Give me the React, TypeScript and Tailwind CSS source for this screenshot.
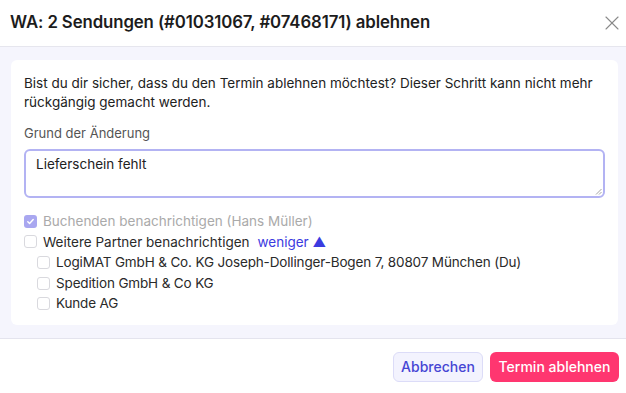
import { X } from "lucide-react";

const partners = [
  "LogiMAT GmbH & Co. KG Joseph-Dollinger-Bogen 7, 80807 München (Du)",
  "Spedition GmbH & Co KG",
  "Kunde AG",
];

function Box({ checked = false }: { checked?: boolean }) {
  if (checked) {
    return (
      <span className="flex h-[13px] w-[13px] shrink-0 items-center justify-center rounded-[3px] bg-[#a9a7f0]">
        <svg width="9" height="9" viewBox="0 0 10 10" fill="none">
          <path d="M2 5.2l2 2 4-4.4" stroke="white" strokeWidth="1.6" strokeLinecap="round" strokeLinejoin="round" />
        </svg>
      </span>
    );
  }
  return <span className="h-[13px] w-[13px] shrink-0 rounded-[3px] border border-[#d9d9de] bg-white" />;
}

export default function App() {
  return (
    <div className="flex h-[393px] w-[626px] flex-col bg-white font-['Inter',sans-serif] text-[#222]">
      <header className="flex h-[47px] shrink-0 items-center justify-between border-b border-[#e6e6ee] pl-[10px] pr-[2px]">
        <h1 className="text-[16.8px] font-semibold tracking-[-0.1px] text-[#1c1c1c]">
          WA: 2 Sendungen (#01031067, #07468171) ablehnen
        </h1>
        <X size={24} strokeWidth={1.1} className="text-[#8a8a8a]" />
      </header>

      <main className="flex-1 border-b border-[#e4e4ee] bg-[#f5f5fd] pb-[13px] pl-[11px] pr-[8px] pt-[13px]">
        <div className="h-full rounded-md bg-white px-[13px] pt-[14px]">
          <p className="text-[13.5px] leading-[19px] text-[#222]">
            Bist du dir sicher, dass du den Termin ablehnen möchtest? Dieser Schritt kann nicht mehr rückgängig gemacht werden.
          </p>
          <label className="mt-[12px] block text-[13px] leading-[18px] text-[#555]">Grund der Änderung</label>
          <div className="relative mt-[7px] h-[49px] rounded-md border-2 border-[#b3b3f3] px-[10px] pt-[4px] text-[13.5px] leading-[18px] text-[#222]">
            Lieferschein fehlt
            <svg className="absolute bottom-[1px] right-[1px]" width="7" height="7" viewBox="0 0 7 7">
              <path d="M6.5 1L1 6.5M6.5 4L4 6.5" stroke="#9a9a9a" strokeWidth="0.9" />
            </svg>
          </div>
          <div className="mt-[14px] flex flex-col gap-[2px] text-[13.5px] leading-[18.6px]">
            <div className="flex items-center gap-[6px]">
              <Box checked />
              <span className="text-[#aaaaaa]">Buchenden benachrichtigen (Hans Müller)</span>
            </div>
            <div className="flex items-center gap-[6px]">
              <Box />
              <span className="text-[#2a2a2a]">Weitere Partner benachrichtigen</span>
              <span className="ml-[2px] text-[#3b3be0]">weniger ▲</span>
            </div>
            <div className="flex flex-col gap-[2px] pl-[13px]">
              {partners.map((p) => (
                <div key={p} className="flex items-center gap-[6px]">
                  <Box />
                  <span className="tracking-[-0.15px] text-[#2a2a2a]">{p}</span>
                </div>
              ))}
            </div>
          </div>
        </div>
      </main>

      <footer className="flex h-[54px] shrink-0 items-center justify-end gap-[7px] pr-[7px] pt-[1px]">
        <button className="h-[30px] w-[90px] rounded-md border border-[#dcdcf8] bg-[#f3f3fe] text-[14px] font-medium text-[#4646d4]">
          Abbrechen
        </button>
        <button className="h-[30px] w-[129px] rounded-md bg-[#ff3670] text-[14px] font-medium text-white">
          Termin ablehnen
        </button>
      </footer>
    </div>
  );
}
